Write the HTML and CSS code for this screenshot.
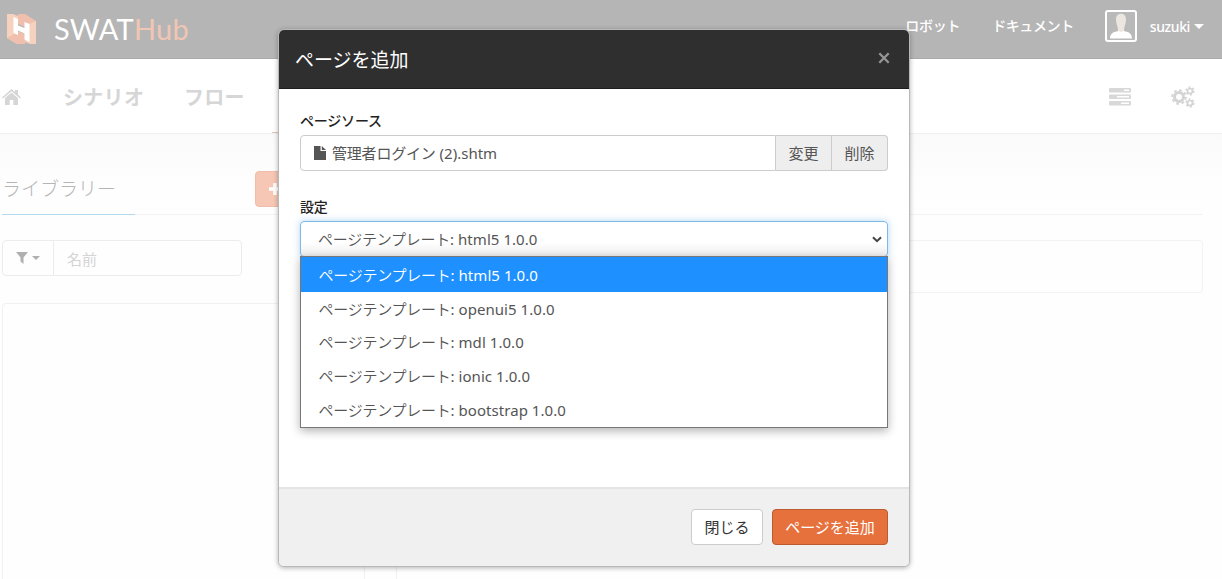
FILE: index.html
```html
<!DOCTYPE html>
<html lang="ja">
<head>
<meta charset="utf-8">
<title>SWATHub</title>
<link rel="stylesheet" href="styles.css">
</head>
<body>
<div class="page">
  <header class="topbar">
    <svg class="logo" width="29" height="30" viewBox="0 0 29 30">
      <path d="M0 0H6L11 2V29L10 30L0 24Z" fill="#f6d1be"/>
      <path d="M18 4L29 7V30H23L18 28Z" fill="#f6d1be"/>
      <path d="M11 0H18L29 7L22 10L18 9V13L11 10Z" fill="#f0bfae"/>
      <path d="M7 20L11 17L18 20V30H10L0 24Z" fill="#f0bfae"/>
      <path d="M6.500 3L11 5V11.500L17.500 14V8L22.500 10V28L17.500 25.500V19.500L11 16.500V21L6.500 19Z" fill="#fff"/>
    </svg>
    <div class="brand"><span>SWAT</span><span class="brand-hub">Hub</span></div>
    <nav class="toplinks">
      <span class="robot">ロボット</span>
      <span class="docs">ドキュメント</span>
      <svg class="avatar" width="32" height="32" viewBox="0 0 32 32">
        <rect x="1" y="1" width="30" height="30" rx="2" fill="#b9b9b9" stroke="#fff" stroke-width="2"/>
        <path d="M5 28.500C5 23 9 22 13 21V16H19V21C23 22 27 23 27 28.500Z" fill="#fff"/>
        <path d="M11 9C11 2 21 2 21 9C21 14 19 17 19 20Q16 24 13 20C13 17 11 14 11 9Z" fill="#ece6e0"/>
      </svg>
      <span class="user">suzuki</span>
      <i class="caret caret-light"></i>
    </nav>
  </header>
  <nav class="menu">
    <svg class="home" width="19" height="16" viewBox="0 0 19 16"><path d="M0 8.500L9.500 0L13 3V1H16V5.600L19 8.500L18 9.600L9.500 2.300L1 9.600ZM3 9L9.500 3.500L16 9V16H11.300V11H7.700V16H3Z" fill="#d6d6d6"/></svg>
    <span class="menu-scenario">シナリオ</span>
    <span class="menu-flow">フロー</span>
    <i class="menu-active"></i>
    <svg class="servers" width="22" height="18" viewBox="0 0 22 18" fill="#d8d8d8"><rect width="22" height="4.600" rx="1"/><rect y="6.500" width="22" height="4.600" rx="1"/><rect y="13" width="22" height="4.600" rx="1"/><g fill="#fff"><rect x="15" y="1.500" width="5" height="1.500"/><rect x="8" y="8" width="12" height="1.500"/><rect x="12" y="14.500" width="8" height="1.500"/></g></svg>
    <svg class="gears" width="24" height="22" viewBox="0 0 24 22" fill="none" stroke="#d4d4d4">
      <circle cx="8" cy="11" r="4.500" stroke-width="3"/><circle cx="8" cy="11" r="6.800" stroke-width="2" stroke-dasharray="2.670 2.670"/>
      <circle cx="19" cy="5" r="2.500" stroke-width="1.700"/><circle cx="19" cy="5" r="3.900" stroke-width="1.500" stroke-dasharray="2.040 2.040"/>
      <circle cx="19" cy="17" r="2.500" stroke-width="1.700"/><circle cx="19" cy="17" r="3.900" stroke-width="1.500" stroke-dasharray="2.040 2.040"/>
    </svg>
  </nav>
  <main class="content">
    <div class="heading">
      <span class="tab">ライブラリー</span>
      <span class="add"><svg width="12" height="12" viewBox="0 0 12 12"><path d="M4.200 0H7.800V4.200H12V7.800H7.800V12H4.200V7.800H0V4.200H4.200Z" fill="#fff"/></svg></span>
    </div>
    <div class="tools">
      <div class="filter">
        <span class="filter-button"><svg width="12" height="12" viewBox="0 0 12 12"><path d="M0 0H12L7.500 5.500V12L4.500 9.500V5.500Z" fill="#b0b0b0"/></svg><i class="caret"></i></span>
        <span class="filter-input">名前</span>
      </div>
      <div class="summary"></div>
    </div>
    <div class="panels"><div class="panel panel-tree"></div><div class="panel panel-main"></div></div>
  </main>
</div>

<section class="modal">
  <header class="modal-head">
    <h1>ページを追加</h1>
    <svg class="close" width="12" height="12" viewBox="0 0 12 12"><path d="M1.300 1.300L10.700 10.700M10.700 1.300L1.300 10.700" stroke="#969696" stroke-width="2.300"/></svg>
  </header>
  <div class="modal-body">
    <label class="label label-source">ページソース</label>
    <div class="file-row">
      <div class="file">
        <svg width="12" height="14" viewBox="0 0 12 14" fill="#555"><path d="M0 0H6.500V5H12V14H0Z"/><path d="M7.800 0L12 4H7.800Z"/></svg>
        <span class="filename">管理者ログイン</span><span class="suffix">(2).shtm</span>
      </div>
      <span class="file-btn">変更</span><span class="file-btn file-del">削除</span>
    </div>
    <label class="label label-setting">設定</label>
    <div class="select">
      <span class="tpl"><b>ページテンプレート</b>: html5 1.0.0</span>
      <svg class="chevron" width="10" height="7" viewBox="0 0 10 7"><path d="M1 1.200L5 5.200L9 1.200" fill="none" stroke="#444" stroke-width="2"/></svg>
      <div class="options">
        <div class="option selected tpl"><b>ページテンプレート</b>: html5 1.0.0</div>
        <div class="option tpl"><b>ページテンプレート</b>: openui5 1.0.0</div>
        <div class="option tpl"><b>ページテンプレート</b>: mdl 1.0.0</div>
        <div class="option tpl"><b>ページテンプレート</b>: ionic 1.0.0</div>
        <div class="option tpl"><b>ページテンプレート</b>: bootstrap 1.0.0</div>
      </div>
    </div>
  </div>
  <footer class="modal-foot">
    <button class="btn btn-close">閉じる</button>
    <button class="btn btn-add">ページを追加</button>
  </footer>
</section>
</body>
</html>
```
FILE: styles.css
```css
* { box-sizing: border-box; }
body {
  margin: 0;
  width: 1222px;
  height: 579px;
  overflow: hidden;
  position: relative;
  background: #fefefe;
  color: #555;
  font: 15px/20px "Noto Sans", "Noto Sans CJK JP", sans-serif;
}
svg { display: block; flex: none; }
span { white-space: nowrap; }
.page { height: 579px; }
.topbar {
  height: 59px;
  background: #b5b5b5;
  border-bottom: 1px solid #aaa;
  display: flex;
  align-items: flex-start;
  color: #fff;
}
.logo { margin: 14px 0 0 7px; }
.brand {
  margin: 13px 0 0 18px;
  font: 29px/32px Lato, sans-serif;
  letter-spacing: 0.2px;
}
.brand-hub { color: #f1c5b4; }
.toplinks {
  margin: 10px 18px 0 auto;
  height: 32px;
  display: flex;
  align-items: center;
  font-size: 14px;
  font-weight: 500;
}
.robot { letter-spacing: -0.3px; }
.docs { margin-left: 32px; letter-spacing: -0.4px; }
.avatar { margin-left: 31px; }
.user { margin-left: 13px; letter-spacing: -0.4px; padding-top: 2px; }
.caret {
  border: 4px solid transparent;
  border-top-color: #b0b0b0;
  border-bottom: 0;
}
.caret-light { border-top-color: #fff; border-width: 5px 5px 0; margin-left: 4px; }
.menu {
  height: 75px;
  background: #fff;
  border-bottom: 1px solid #f1f1f1;
  display: flex;
  align-items: center;
  color: #d6d6d6;
  font-size: 20px;
  font-weight: 700;
}
.home { margin: 2px 0 0 2px; }
.menu-scenario { margin: 3px 0 0 42px; width: 82px; letter-spacing: 0.3px; }
.menu-flow { margin: 3px 0 0 39px; width: 62px; letter-spacing: 0.3px; }
.menu-active { width: 300px; height: 1px; background: #eac5b8; margin: 73px 0 0 26px; }
.servers { margin: 1px 0 0 auto; }
.gears { margin: 1px 27px 0 40px; }
.content {
  height: 445px;
  background: linear-gradient(#fafafa, #fefefe 55px);
  padding: 37px 19px 0 2px;
}
.heading {
  height: 44px;
  border-bottom: 1px solid #f3f3f3;
  display: flex;
  align-items: flex-start;
}
.tab {
  width: 133px;
  height: 44px;
  border-bottom: 1px solid #b5d9ee;
  color: #b5b5b5;
  font-size: 19px;
  font-weight: 300;
  line-height: 36px;
}
.add {
  width: 44px;
  height: 36px;
  margin-left: 120px;
  padding: 11px 0 0 13px;
  border: 1px solid #f0bda8;
  border-radius: 4px;
  background: #f5c7b4;
}
.tools { display: flex; padding-top: 25px; height: 88px; }
.filter {
  width: 240px;
  height: 36px;
  border: 1px solid #ececec;
  border-radius: 4px;
  display: flex;
}
.filter-button {
  width: 51px;
  border-right: 1px solid #ececec;
  display: flex;
  align-items: center;
  padding-left: 13px;
  gap: 4px;
}
.filter-input { padding-left: 13px; color: #d4d4d4; line-height: 36px; }
.summary {
  flex: 1;
  margin-left: 153px;
  height: 53px;
  border: 1px solid #f3f3f3;
  border-radius: 4px;
}
.panels { display: flex; gap: 31px; height: 280px; }
.panel { border: 1px solid #f1f1f1; border-radius: 4px; }
.panel-tree { width: 363px; }
.panel-main { flex: 1; border-width: 0 0 0 1px; }
.modal {
  position: absolute;
  left: 278px;
  top: 29px;
  width: 632px;
  height: 538px;
  border: 1px solid #b9b9b9;
  border-radius: 6px;
  background: #fff;
  box-shadow: 0 1px 5px rgba(0, 0, 0, .3);
  display: flex;
  flex-direction: column;
}
.modal-head {
  height: 59px;
  border-radius: 5px 5px 0 0;
  background: #2f2f2f;
  border-bottom: 1px solid #1e1e1e;
  display: flex;
  justify-content: space-between;
  padding: 0 19px 0 16px;
}
.modal-head h1 {
  margin: 0;
  color: #fff;
  font-size: 19px;
  font-weight: 400;
  line-height: 60px;
}
.close { margin-top: 22px; }
.modal-body { flex: 1; padding: 22px 21px 0; }
.label {
  display: block;
  height: 20px;
  font-size: 14px;
  font-weight: 500;
  color: #222;
  letter-spacing: -0.2px;
}
.file-row { display: flex; height: 36px; margin-top: 4px; }
.file {
  flex: 1;
  border: 1px solid #ccc;
  border-radius: 4px 0 0 4px;
  display: flex;
  align-items: center;
  padding-left: 13px;
}
.filename { margin-left: 6px; letter-spacing: -0.2px; }
.suffix { margin-left: 4px; letter-spacing: 0; }
.file-btn {
  width: 56px;
  background: #eee;
  border: 1px solid #ccc;
  border-left: 0;
  text-align: center;
  line-height: 34px;
}
.file-del { border-radius: 0 4px 4px 0; }
.label-setting { margin-top: 26px; }
.select {
  position: relative;
  height: 36px;
  margin-top: 4px;
  border: 1px solid #7db9e2;
  border-radius: 4px;
  box-shadow: 0 0 7px rgba(102, 175, 233, .5);
  background: linear-gradient(#fff 60%, #eee);
  display: flex;
  align-items: center;
  justify-content: space-between;
  padding: 0 5px 0 17px;
}
.tpl { letter-spacing: 0.05px; }
.tpl b { font-weight: 350; letter-spacing: -0.25px; }
.options {
  position: absolute;
  left: -1px;
  top: 34px;
  width: 588px;
  height: 172px;
  border: 1px solid #777;
  background: #fff;
  box-shadow: 0 3px 9px rgba(0, 0, 0, .3);
}
.option { height: 33.8px; padding-left: 17.500px; line-height: 34px; }
.selected { height: 34.500px; line-height: 36px; background: #1e90ff; color: #fff; }
.modal-foot {
  height: 79px;
  border-top: 2px solid #e4e4e4;
  border-radius: 0 0 5px 5px;
  background: #f0f0f0;
  display: flex;
  justify-content: flex-end;
  gap: 9px;
  padding: 20px 21px 0;
}
.btn {
  height: 36px;
  padding: 0;
  border: 1px solid #ccc;
  border-radius: 4px;
  background: #fff;
  color: #333;
  font: 15px/32px "Noto Sans CJK JP", sans-serif;
}
.btn-close { width: 72px; }
.btn-add { width: 116px; background: #e6713d; border-color: #bd5b30; color: #fff; }
```
